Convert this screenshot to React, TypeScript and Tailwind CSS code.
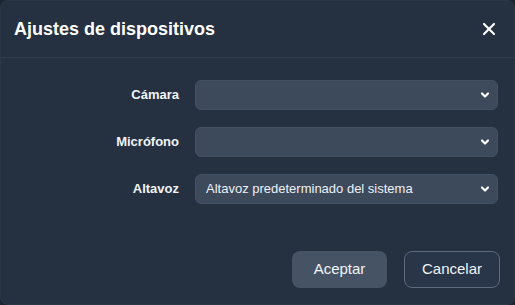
import { X } from "lucide-react";

const rows = [
  { label: "Cámara", value: "" },
  { label: "Micrófono", value: "" },
  { label: "Altavoz", value: "Altavoz predeterminado del sistema" },
];

function Chevron() {
  return (
    <svg
      width="10"
      height="10"
      viewBox="0 0 10 10"
      className="pointer-events-none absolute right-[8px] top-1/2 -translate-y-1/2"
    >
      <path d="M2 3.5 L5 6.5 L8 3.5" fill="none" stroke="#ffffff" strokeWidth="2.2" strokeLinecap="round" strokeLinejoin="round" />
    </svg>
  );
}

export default function App() {
  return (
    <div className="h-[305px] w-[515px] bg-[#1c2530] font-['Liberation_Sans',Arial,sans-serif] text-white">
      <div className="flex h-full flex-col rounded-lg border border-[#2c3747] bg-[#253040]">
        {/* header */}
        <div className="flex h-[57px] items-center justify-between border-b border-[#313d4d] pl-[13px] pr-[15px]">
          <h2 className="text-[18px] font-bold">Ajustes de dispositivos</h2>
          <button className="text-white">
            <X size={20} strokeWidth={2.6} />
          </button>
        </div>

        {/* form */}
        <div className="grid grid-cols-[162px_1fr] items-center gap-x-4 gap-y-[17px] pl-[16px] pr-[16px] pt-[22px]">
          {rows.map((row) => (
            <div key={row.label} className="contents">
              <label className="text-right text-[13px] font-bold text-[#f1f4f8]">{row.label}</label>
              <div className="relative">
                <div className="flex h-[30px] items-center rounded-md border border-[#435165] bg-[#3d4a5c] px-[10px] text-[13px] text-[#eef1f5]">
                  {row.value}
                </div>
                <Chevron />
              </div>
            </div>
          ))}
        </div>

        {/* footer */}
        <div className="mt-auto flex justify-end gap-[17px] pb-[16px] pr-[14px]">
          <button className="h-[37px] w-[95px] rounded-lg bg-[#465365] text-[15px] text-[#f1f4f8]">
            Aceptar
          </button>
          <button className="h-[37px] w-[96px] rounded-lg border border-[#5c6a7c] bg-[#29364a] text-[15px] text-[#f1f4f8]">
            Cancelar
          </button>
        </div>
      </div>
    </div>
  );
}
